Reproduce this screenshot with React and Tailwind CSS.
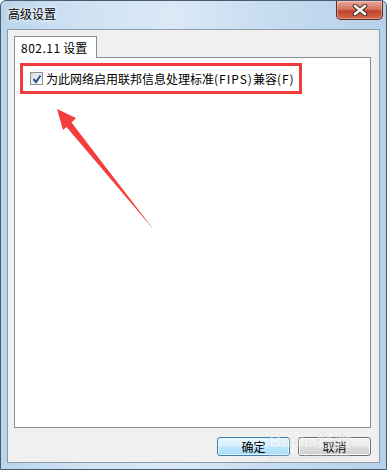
import React from 'react';

const cjk = { fontFamily: '"Noto Sans CJK SC", "Liberation Sans", sans-serif' };

const CloseButton = () => (
  <div className="w-[47px] h-[19px] rounded-b-[5px] border border-t-0 border-[#5e2a22] bg-[linear-gradient(#e9a99b,#d47460_45%,#c0432c_55%,#d26a4c)] flex items-center justify-center shadow-[inset_0_0_0_1px_rgba(255,255,255,0.35)]">
    <svg width="16" height="12" viewBox="0 0 16 12">
      <path d="M3 2 L13 10 M13 2 L3 10" stroke="#40261f" strokeWidth="4.5" strokeLinecap="round" />
      <path d="M3 2 L13 10 M13 2 L3 10" stroke="#ffffff" strokeWidth="2.6" strokeLinecap="round" />
    </svg>
  </div>
);

const Checkbox = () => (
  <div className="w-[13px] h-[13px] border border-[#8f8f8f] bg-[linear-gradient(135deg,#dcdcdc,#fbfbfb)] flex items-center justify-center shrink-0">
    <svg width="10" height="10" viewBox="0 0 10 10">
      <path d="M1.5 5 L4 8 L8.5 1.5" fill="none" stroke="#2f4f9c" strokeWidth="2" />
    </svg>
  </div>
);

const Button = ({ children, primary }) => (
  <div
    className={
      primary
        ? 'w-[73px] h-[19px] rounded-[3px] border border-[#3c7fb1] bg-[linear-gradient(#eaf6fd,#d9f0fc_45%,#bee6fd_55%,#a7d9f5)] shadow-[inset_0_0_0_1px_#e6f5fc] flex items-center justify-center text-[12px] text-black'
        : 'w-[73px] h-[19px] rounded-[3px] border border-[#707070] bg-[linear-gradient(#f2f2f2,#ebebeb_45%,#dddddd_55%,#cfcfcf)] shadow-[inset_0_0_0_1px_#fcfcfc] flex items-center justify-center text-[12px] text-black'
    }
    style={cjk}
  >
    {children}
  </div>
);

export default function App() {
  return (
    <div className="w-[389px] h-[471px] bg-white overflow-hidden" style={cjk}>
      <div className="relative w-[387px] h-[470px] rounded-t-[6px] border border-[#4a5b6e] bg-[linear-gradient(90deg,#b9d4ec,#cfe2f3_20%,#dbe9f6_45%,#c6dcf0_70%,#b6d1ea)] flex flex-col">
        {/* title bar */}
        <div className="h-[28px] flex items-start justify-between pl-[7px] pr-[3px]">
          <span className="mt-[6px] text-[12px] leading-[14px] text-black [text-shadow:0_0_6px_#ffffff,0_0_3px_#ffffff]">高级设置</span>
          <CloseButton />
        </div>

        {/* client area */}
        <div className="mx-[6px] h-[434px] border border-[#8d9aa8] bg-[#f0f0f0] flex flex-col pl-[6px] pr-[8px] pt-[6px]">
          <div className="flex">
            <div className="relative z-10 w-[83px] h-[22px] border border-b-0 border-[#898c95] bg-white pl-[6px] pt-[3px] text-[12px] leading-[15px] text-black -mb-px">
              <span className="tracking-[0.5px]">802.11</span> 设置
            </div>
          </div>
          <div className="relative h-[371px] border border-[#898c95] bg-white pl-[5px] pt-[5px]">
            <div className="w-[282px] h-[31px] border-[3px] border-[#f03b3b] flex items-center gap-[3px] pl-[7px]">
              <Checkbox />
              <span className="text-[12px] leading-[14px] text-black whitespace-nowrap">
                为此网络启用联邦信息处理标准<span className="tracking-[1px]">(FIPS)</span>兼容<span className="tracking-[1px]">(F)</span>
              </span>
            </div>
          </div>

          <div className="flex justify-end gap-[8px] mt-[9px]">
            <Button primary>确定</Button>
            <Button>取消</Button>
          </div>
        </div>

        {/* annotation arrow */}
        <svg className="absolute left-0 top-0 pointer-events-none" width="389" height="471" viewBox="0 0 389 471">
          <polygon points="56,108 75,117 70.5,121.5 153,229 65.5,126 62,129" fill="#f43e3e" />
        </svg>

        {/* watermark */}
        <div className="absolute left-[268px] top-[430px] pointer-events-none flex flex-col items-start leading-none opacity-40">
          <span className="text-[17px] font-bold text-white [text-shadow:0_0_1px_#8a8a8a]" style={{ fontFamily: '"Liberation Sans", sans-serif' }}>Bai<span className="text-[14px]">du</span> <span style={cjk}>经验</span></span>
          <span className="text-[10px] text-white [text-shadow:0_0_1px_#8a8a8a] mt-[2px]" style={{ fontFamily: '"Liberation Sans", sans-serif' }}>jingyan.baidu.com</span>
        </div>
      </div>
    </div>
  );
}
